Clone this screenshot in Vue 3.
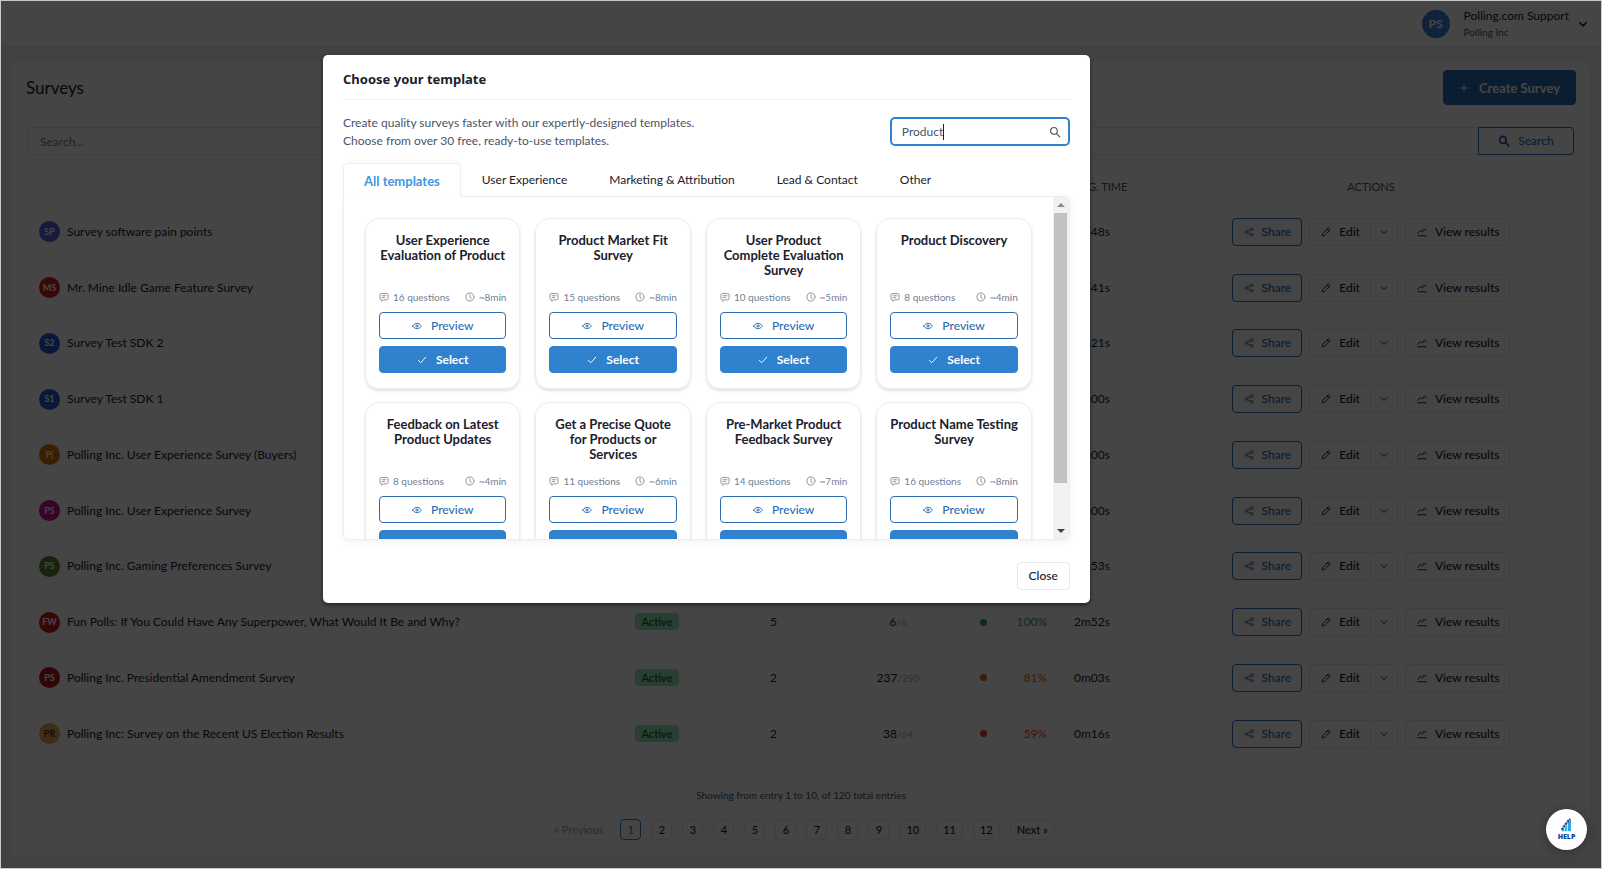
<script setup>
import { h, ref } from 'vue'

const shapes = {
  share: 'M5.6 7.1 10.4 4.4M5.6 8.9l4.8 2.7M5.9 8a2.1 2.1 0 1 1-4.2 0 2.1 2.1 0 0 1 4.2 0M14.3 3.6a2.1 2.1 0 1 1-4.2 0 2.1 2.1 0 0 1 4.2 0M14.3 12.4a2.1 2.1 0 1 1-4.2 0 2.1 2.1 0 0 1 4.2 0',
  edit: 'M2.2 13.8l.6-3.6L10.9 2.1a1.6 1.6 0 0 1 2.3 0l.7.7a1.6 1.6 0 0 1 0 2.3L5.8 13.2zM9.6 3.6l2.8 2.8',
  down: 'M3.5 6l4.5 4.5L12.500 6',
  chart: 'M1.500 14h13M1.500 10 5.500 5.500l3 2.500 3.500-5 2.500 2.500',
  plus: 'M8 1.500v13M1.500 8h13',
  check: 'M2 8.500l4 4 8-9',
  clock: 'M14.500 8a6.500 6.500 0 1 1-13 0 6.500 6.500 0 0 1 13 0M8 4.500V8l2 3',
  note: 'M1.500 4.500a2 2 0 0 1 2-2h9a2 2 0 0 1 2 2v6a2 2 0 0 1-2 2h-5L4.500 15v-2.500h-1a2 2 0 0 1-2-2zM5 6h6M5 9h4',
  eye: 'M1 8s2.500-4.300 7-4.300S15 8 15 8s-2.500 4.300-7 4.300S1 8 1 8zM9.800 8a1.800 1.800 0 1 1-3.600 0 1.800 1.800 0 0 1 3.600 0',
  search: 'M11 6.500a4.500 4.500 0 1 1-9 0 4.500 4.500 0 0 1 9 0M9.800 9.800l4.700 4.700',
}

const Icon = (props) =>
  h('svg', { viewBox: '0 0 16 16', class: 'icon', 'aria-hidden': 'true' }, [
    h('path', { d: shapes[props.name] }),
  ])
Icon.props = ['name']

const surveys = [
  { initials: 'SP', tone: 'indigo', name: 'Survey software pain points', time: '3m48s' },
  { initials: 'MS', tone: 'red', name: 'Mr. Mine Idle Game Feature Survey', time: '2m41s' },
  { initials: 'S2', tone: 'blue', name: 'Survey Test SDK 2', time: '0m21s' },
  { initials: 'S1', tone: 'blue', name: 'Survey Test SDK 1', time: '0m00s' },
  { initials: 'P(', tone: 'orange', name: 'Polling Inc. User Experience Survey (Buyers)', time: '0m00s' },
  { initials: 'PS', tone: 'magenta', name: 'Polling Inc. User Experience Survey', time: '0m00s' },
  { initials: 'PS', tone: 'green', name: 'Polling Inc. Gaming Preferences Survey', time: '0m53s' },
  { initials: 'FW', tone: 'crimson', name: 'Fun Polls: If You Could Have Any Superpower, What Would It Be and Why?', status: 'Active', questions: 5, done: 6, total: 6, rate: '100%', level: 'good', time: '2m52s' },
  { initials: 'PS', tone: 'maroon', name: 'Polling Inc. Presidential Amendment Survey', status: 'Active', questions: 2, done: 237, total: 290, rate: '81%', level: 'fair', time: '0m03s' },
  { initials: 'PR', tone: 'sand', name: 'Polling Inc: Survey on the Recent US Election Results', status: 'Active', questions: 2, done: 38, total: 64, rate: '59%', level: 'poor', time: '0m16s' },
]

const tabs = ['All templates', 'User Experience', 'Marketing & Attribution', 'Lead & Contact', 'Other']
const activeTab = ref('All templates')
const query = ref('Product')

const templates = [
  { title: 'User Experience Evaluation of Product', questions: 16, minutes: 8 },
  { title: 'Product Market Fit Survey', questions: 15, minutes: 8 },
  { title: 'User Product Complete Evaluation Survey', questions: 10, minutes: 5 },
  { title: 'Product Discovery', questions: 8, minutes: 4 },
  { title: 'Feedback on Latest Product Updates', questions: 8, minutes: 4 },
  { title: 'Get a Precise Quote for Products or Services', questions: 11, minutes: 6 },
  { title: 'Pre-Market Product Feedback Survey', questions: 14, minutes: 7 },
  { title: 'Product Name Testing Survey', questions: 16, minutes: 8 },
]
</script>

<template>
  <div class="app">
    <header class="topbar">
      <span class="avatar avatar-lg">PS</span>
      <div class="account">
        <span class="account-name">Polling.com Support</span>
        <span class="account-org">Polling Inc</span>
      </div>
      <Icon name="down" class="account-caret" />
    </header>

    <main class="panel">
      <div class="panel-head">
        <h1>Surveys</h1>
        <button class="create" type="button"><Icon name="plus" />Create Survey</button>
      </div>

      <form class="search" @submit.prevent>
        <input type="text" placeholder="Search..." aria-label="Search surveys" />
        <button type="submit"><Icon name="search" />Search</button>
      </form>

      <table>
        <colgroup>
          <col />
          <col class="c-status" />
          <col class="c-questions" />
          <col class="c-responses" />
          <col class="c-rate" />
          <col class="c-time" />
          <col class="c-actions" />
        </colgroup>
        <thead>
          <tr>
            <th></th><th></th><th></th><th></th><th></th>
            <th class="left" scope="col">AVG. TIME</th>
            <th scope="col">ACTIONS</th>
          </tr>
        </thead>
        <tbody>
          <tr v-for="s in surveys" :key="s.name">
            <td>
              <div class="name-cell">
                <span class="avatar" :class="s.tone">{{ s.initials }}</span>
                <span>{{ s.name }}</span>
              </div>
            </td>
            <td class="center"><span v-if="s.status" class="badge">{{ s.status }}</span></td>
            <td class="center">{{ s.questions }}</td>
            <td class="center"><template v-if="s.total">{{ s.done }}<small>/{{ s.total }}</small></template></td>
            <td>
              <div v-if="s.rate" class="rate" :class="s.level"><i></i>{{ s.rate }}</div>
            </td>
            <td class="time">{{ s.time }}</td>
            <td>
              <div class="actions">
                <button class="btn share" type="button"><Icon name="share" />Share</button>
                <div class="split">
                  <button class="btn" type="button"><Icon name="edit" />Edit</button>
                  <button class="btn" type="button" aria-label="More edit options"><Icon name="down" /></button>
                </div>
                <button class="btn" type="button"><Icon name="chart" />View results</button>
              </div>
            </td>
          </tr>
        </tbody>
      </table>

      <p class="summary">Showing from entry 1 to 10, of 120 total entries</p>
      <nav class="pages" aria-label="Pages">
        <button type="button" disabled>« Previous</button>
        <button v-for="n in 12" :key="n" type="button" :class="{ current: n === 1 }">{{ n }}</button>
        <button type="button">Next »</button>
      </nav>
    </main>

    <div class="overlay">
      <section class="modal" role="dialog" aria-labelledby="modal-title">
        <h2 id="modal-title">Choose your template</h2>
        <div class="intro">
          <p>Create quality surveys faster with our expertly-designed templates.<br />Choose from over 30 free, ready-to-use templates.</p>
          <label class="finder">
            <span class="finder-text">
              <input v-model="query" type="text" aria-label="Search templates" />
              <i class="caret"></i>
            </span>
            <Icon name="search" />
          </label>
        </div>

        <div class="tabs" role="tablist">
          <button
            v-for="t in tabs"
            :key="t"
            type="button"
            role="tab"
            :aria-selected="t === activeTab"
            :class="{ active: t === activeTab }"
            @click="activeTab = t"
          >{{ t }}</button>
        </div>

        <div class="viewport">
          <div class="cards">
            <article v-for="t in templates" :key="t.title" class="card">
              <h3>{{ t.title }}</h3>
              <div class="meta">
                <span><Icon name="note" />{{ t.questions }} questions</span>
                <span><Icon name="clock" />~{{ t.minutes }}min</span>
              </div>
              <button class="preview" type="button"><Icon name="eye" />Preview</button>
              <button class="select" type="button"><Icon name="check" />Select</button>
            </article>
          </div>
          <div class="scrollbar" aria-hidden="true">
            <i class="arrow up"></i>
            <div class="track"><div class="thumb"></div></div>
            <i class="arrow dn"></i>
          </div>
        </div>

        <div class="modal-foot">
          <button type="button">Close</button>
        </div>
      </section>

      <button class="help" type="button">
        <svg viewBox="0 0 16 16" aria-hidden="true">
          <path d="M12.500 1v14H9V5.500z" fill="#29a9e1" />
          <path d="M8.300 7.500V15H5.500v-4z" fill="#35b6ea" />
          <path d="M4.800 12V15H2z" fill="#29a9e1" />
          <path d="M2 13.500 5 9 7.300 6 11.500 1" fill="none" stroke="#1b3f94" stroke-width="2.400" stroke-dasharray="2.800 .8" />
        </svg>
        <span>HELP</span>
      </button>
    </div>
  </div>
</template>

<style>
body {
  margin: 0;
}
</style>

<style scoped>
* {
  box-sizing: border-box;
}
.app {
  position: relative;
  display: flex;
  flex-direction: column;
  min-height: 100vh;
  padding: 1px;
  background: #edf2f7;
  color: #1a202c;
  font: 12px/18px Lato, "Open Sans", sans-serif;
}
button,
input {
  font: inherit;
  color: inherit;
  margin: 0;
}
button {
  display: inline-flex;
  align-items: center;
  justify-content: center;
  background: #fff;
  cursor: pointer;
  white-space: nowrap;
}
h1,
h2,
h3,
p {
  margin: 0;
}
.icon {
  width: 10px;
  height: 10px;
  flex: none;
  fill: none;
  stroke: currentColor;
  stroke-width: 1.500;
  stroke-linecap: round;
  stroke-linejoin: round;
}

.topbar {
  display: flex;
  align-items: center;
  justify-content: flex-end;
  height: 46px;
  padding-right: 12px;
  background: #fff;
  border-bottom: 1px solid #e2e8f0;
}
.avatar {
  display: flex;
  align-items: center;
  justify-content: center;
  flex: none;
  width: 21px;
  height: 21px;
  border-radius: 50%;
  color: #fff;
  font-size: 9px;
  font-weight: 700;
}
.avatar-lg {
  width: 28px;
  height: 28px;
  margin-right: 14px;
  background: #3f7fe0;
  font-size: 12px;
}
.account {
  display: flex;
  flex-direction: column;
}
.account-name {
  line-height: 16px;
}
.account-org {
  font-size: 10px;
  line-height: 16px;
  color: #4a5568;
}
.account-caret {
  width: 12px;
  height: 12px;
  margin-left: 8px;
  stroke-width: 2;
}

.panel {
  flex: 1;
  margin: 15px 11px 11px;
  padding: 0 14px;
  background: #fff;
  border-radius: 6px;
}
.panel-head {
  display: flex;
  align-items: center;
  justify-content: space-between;
  height: 52px;
  border-bottom: 1px solid #edf2f7;
}
h1 {
  font-size: 17px;
  font-weight: 400;
}
.create {
  gap: 10px;
  height: 35px;
  padding: 0 15px;
  border: 1px solid #2b6cb0;
  border-radius: 4px;
  background: #2b6cb0;
  color: #fff;
  font-size: 13px;
  font-weight: 700;
}
.search {
  display: flex;
  margin: 13px 2px 15px;
}
.search input {
  flex: 1;
  height: 28px;
  padding: 0 11px;
  border: 1px solid #e2e8f0;
  border-right: 0;
  border-radius: 4px 0 0 4px;
  background: #fff;
}
.search input::placeholder {
  color: #718096;
  opacity: 1;
}
.search button {
  gap: 8px;
  width: 96px;
  border: 1px solid #2b6cb0;
  border-radius: 0 4px 4px 0;
  color: #2b6cb0;
  font-weight: 500;
}
.search .icon {
  width: 12px;
  height: 12px;
  stroke-width: 2.500;
}

table {
  width: 100%;
  height: 592px;
  table-layout: fixed;
  border-collapse: collapse;
}
.c-status { width: 126px; }
.c-questions { width: 107px; }
.c-responses { width: 142px; }
.c-rate { width: 92px; }
.c-time { width: 105px; }
.c-actions { width: 410px; }
th,
td {
  padding: 0;
  border-bottom: 1px solid #edf2f7;
}
th {
  height: 34px;
  font-size: 11px;
  font-weight: 400;
  color: #4a5568;
}
th.left {
  padding-left: 13px;
  text-align: left;
}
.center {
  text-align: center;
}
.name-cell {
  display: flex;
  align-items: center;
  gap: 7px;
  padding-left: 13px;
}
.indigo { background: #5f5ae0; }
.red { background: #d01c1c; }
.blue { background: #2458d0; }
.orange { background: #d9730d; }
.magenta { background: #c40f8c; }
.green { background: #587f2c; }
.crimson { background: #cf1420; }
.maroon { background: #b01822; }
.sand { background: #eda55c; color: #3d3020; }
.badge {
  display: inline-block;
  padding: 0 6px;
  border-radius: 4px;
  background: #9ae6b4;
  color: #22543d;
  font-size: 11px;
  font-weight: 600;
  line-height: 17px;
}
td small {
  font-size: 10px;
  color: #a0aec0;
}
.rate {
  display: flex;
  align-items: center;
  justify-content: space-between;
  padding: 0 14px 0 11px;
}
.rate i {
  width: 7px;
  height: 7px;
  border-radius: 50%;
  background: currentColor;
}
.good { color: #2f9e5f; }
.fair { color: #dd6b20; }
.poor { color: #e53e3e; }
.time {
  padding-left: 13px;
}
.actions {
  display: flex;
  justify-content: center;
  gap: 7px;
}
.btn {
  height: 28px;
  gap: 8px;
  padding: 0 10px 0 11px;
  border: 1px solid #e2e8f0;
  border-radius: 4px;
  font-weight: 500;
}
.share {
  border-color: #2b6cb0;
  color: #2b6cb0;
}
.split {
  display: flex;
}
.split .btn:first-child {
  border-radius: 4px 0 0 4px;
}
.split .btn:last-child {
  width: 27px;
  padding: 0;
  border-left: 0;
  border-radius: 0 4px 4px 0;
}

.summary {
  margin-top: 24px;
  text-align: center;
  font-size: 10px;
  color: #4a5568;
}
.pages {
  display: flex;
  justify-content: center;
  gap: 10px;
  margin-top: 15px;
}
.pages button {
  min-width: 21px;
  height: 21px;
  padding: 0 6px;
  border: 1px solid #e2e8f0;
  border-radius: 4px;
  font-size: 11px;
  font-weight: 500;
}
.pages button:disabled {
  border-color: #edf2f7;
  color: #a0aec0;
}
.pages .current {
  border-color: #3182ce;
  color: #3182ce;
}

.overlay {
  position: absolute;
  inset: 0;
  display: grid;
  grid-template-columns: 60%;
  align-content: start;
  padding: 54px 0 0 322px;
  border: 1px solid #c8cbca;
  background: rgba(0, 0, 0, 0.73);
}
.modal {
  padding: 0 20px 13px;
  border-radius: 5px;
  background: #fff;
  box-shadow: 0 2px 4px rgba(0, 0, 0, 0.500);
}
h2 {
  padding: 15px 0 11px;
  border-bottom: 1px solid #edf0f4;
  font-family: "Noto Sans", "Open Sans", sans-serif;
  font-size: 13px;
  font-weight: 700;
}
.intro {
  display: flex;
  justify-content: space-between;
  padding: 14px 0 13px;
  color: #4a5568;
}
.finder {
  display: flex;
  align-items: center;
  width: 180px;
  height: 29px;
  margin-top: 3px;
  padding: 0 7px 0 10px;
  border: 2px solid #3182ce;
  border-radius: 5px;
}
.finder-text {
  position: relative;
  flex: 1;
}
.finder input {
  width: 100%;
  padding: 0;
  border: 0;
  outline: 0;
  background: none;
}
.caret {
  position: absolute;
  left: 41px;
  top: 1px;
  width: 1px;
  height: 16px;
  background: #1a202c;
}
.finder .icon {
  width: 12px;
  height: 12px;
}
.tabs {
  display: flex;
}
.tabs button {
  height: 33px;
  padding: 0 20px;
  border: 1px solid transparent;
  border-bottom: 0;
  border-radius: 5px 5px 0 0;
  background: none;
}
.tabs .active {
  position: relative;
  z-index: 1;
  margin-bottom: -1px;
  height: 34px;
  border-color: #e9eff6;
  background: #fff;
  box-shadow: 0 -2px 4px rgba(0, 0, 0, 0.030);
  color: #3e97e2;
  font-size: 13px;
  font-weight: 700;
}
.viewport {
  display: flex;
  height: 344px;
  overflow: hidden;
  border: 1px solid #e9eff6;
  border-radius: 0 5px 5px 5px;
  box-shadow: 0 2px 8px rgba(0, 0, 0, 0.050);
}
.cards {
  flex: 1;
  display: grid;
  grid-template-columns: repeat(4, minmax(0, 1fr));
  gap: 13px 15px;
  align-content: start;
  padding: 21px;
}
.card {
  display: flex;
  flex-direction: column;
  padding: 14px 13px 15px;
  border: 1px solid #e6edf5;
  border-radius: 14px;
  box-shadow: 0 2px 3px rgba(0, 0, 0, 0.120);
}
h3 {
  min-height: 45px;
  margin: 0 -2px;
  text-align: center;
  font-size: 13px;
  font-weight: 700;
  line-height: 15px;
}
.meta {
  display: flex;
  justify-content: space-between;
  margin: 11px 0 7px;
  font-size: 10px;
  line-height: 16px;
  color: #718096;
}
.meta span {
  display: flex;
  align-items: center;
  gap: 4px;
  white-space: nowrap;
}
.meta .icon {
  color: #8e8e8e;
}
.preview,
.select {
  height: 27px;
  gap: 9px;
  border: 1px solid #2b6cb0;
  border-radius: 4px;
  color: #2b6cb0;
  font-weight: 500;
}
.select {
  margin-top: 7px;
  border-color: #3182ce;
  background: #3182ce;
  color: #fff;
  font-weight: 700;
}
.scrollbar {
  display: flex;
  flex-direction: column;
  align-items: center;
  width: 16px;
  padding: 6px 0;
  background: #f1f1f1;
}
.arrow {
  border: 4px solid transparent;
}
.up {
  border-top: 0;
  border-bottom-color: #8a8a8a;
}
.dn {
  border-bottom: 0;
  border-top-color: #404040;
}
.track {
  flex: 1;
  width: 13px;
  margin: 6px 0;
}
.thumb {
  height: 87%;
  background: #c1c1c1;
}
.modal-foot {
  display: flex;
  justify-content: flex-end;
  margin-top: 22px;
}
.modal-foot button {
  height: 28px;
  padding: 0 11px;
  border: 1px solid #e2e8f0;
  border-radius: 4px;
  font-weight: 500;
}

.help {
  position: absolute;
  right: 14px;
  bottom: 18px;
  flex-direction: column;
  width: 41px;
  height: 41px;
  padding: 0;
  border: 0;
  border-radius: 50%;
  box-shadow: 0 2px 12px rgba(0, 0, 0, 0.300);
  color: #1b3f94;
  font-family: "Open Sans", sans-serif;
  font-size: 7px;
  font-weight: 800;
  line-height: 9px;
}
.help svg {
  width: 14px;
  height: 14px;
}
</style>
